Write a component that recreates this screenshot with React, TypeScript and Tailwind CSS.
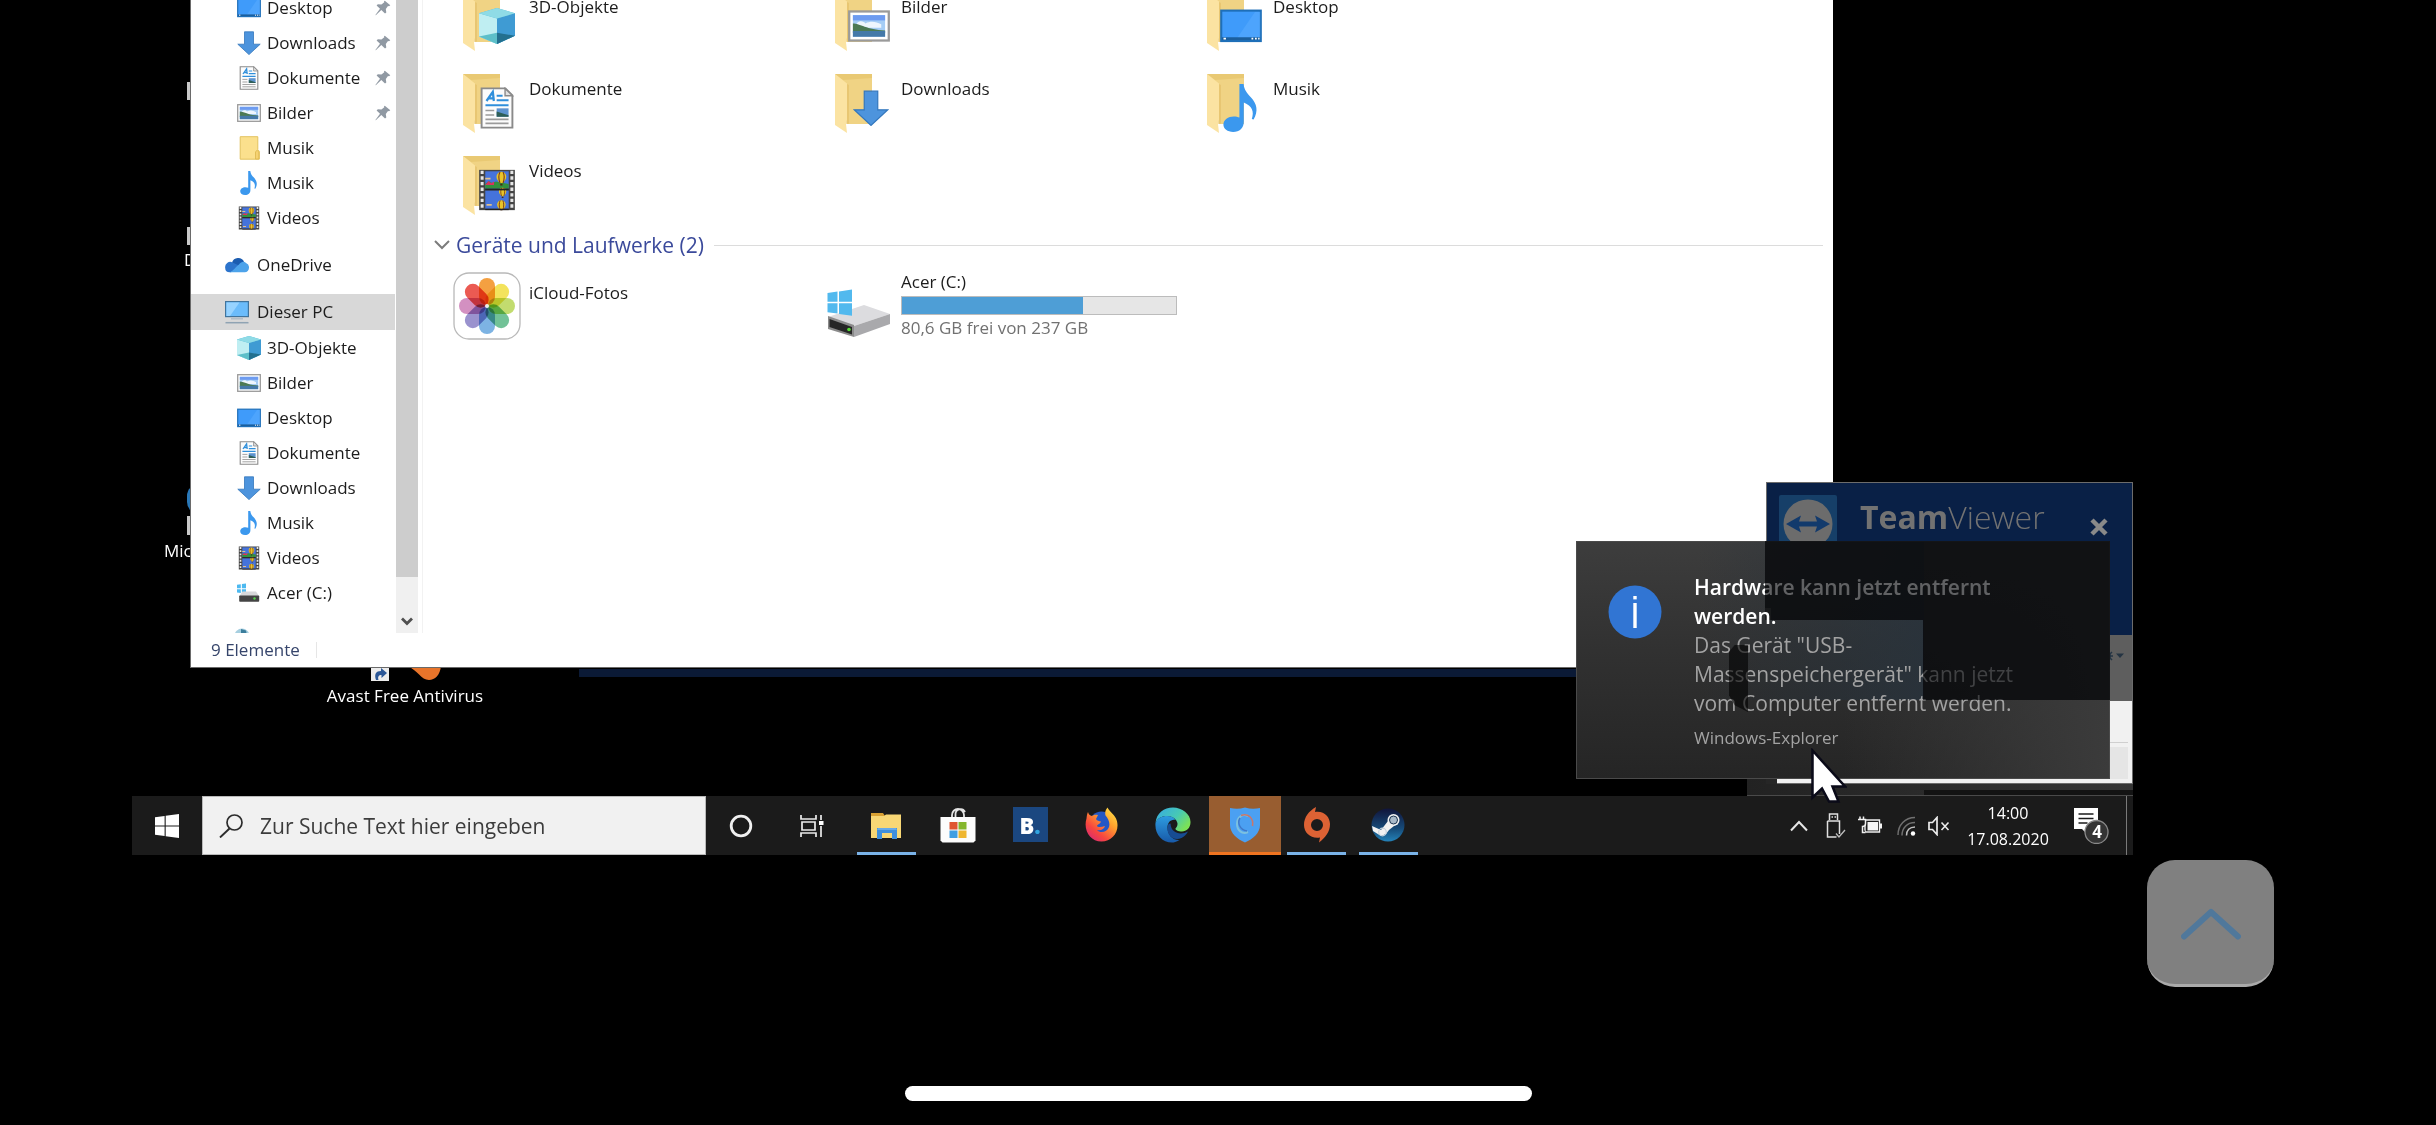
import React from "react";

type IconProps = { className?: string };

/* ---------- Explorer glyphs ---------- */

const DesktopIcon = ({ className = "w-6 h-6 shrink-0" }: IconProps) => (
  <svg viewBox="0 0 24 24" className={className} aria-hidden="true">
    <rect x="0.7" y="3.2" width="22.6" height="17.4" fill="#3f9bfa" stroke="#1e6fb8" strokeWidth="1.2" />
    <path d="M9 20L20 4h3v16z" fill="#5badff" opacity=".5" />
    <path d="M1 19.2h22" stroke="#1b5f9e" strokeWidth="1.6" />
    <path d="M2 19.2h1.4M18 19.2h1M20 19.2h1M21.8 19.2h.8" stroke="#fff" strokeWidth="1" />
  </svg>
);

const DownloadIcon = ({ className = "w-6 h-6 shrink-0" }: IconProps) => (
  <svg viewBox="0 0 24 24" className={className} aria-hidden="true">
    <path d="M7.5 0.8h9v12.4h6.7L12 23.6 0.8 13.2h6.7z" fill="#4d94dd" stroke="#3377bd" strokeWidth=".8" />
  </svg>
);

const DocumentIcon = ({ className = "w-6 h-6 shrink-0" }: IconProps) => (
  <svg viewBox="0 0 24 24" className={className} aria-hidden="true">
    <path d="M3.2 0.8h13.6l4 4v18.4H3.2z" fill="#fcfcfc" stroke="#8a8a8a" strokeWidth="1.1" />
    <path d="M16.6 0.8v4.2h4.2z" fill="#e2e2e2" stroke="#8a8a8a" strokeWidth=".8" />
    <path d="M6 8l3.6-5.2L10.2 8M7 6.5h3" fill="none" stroke="#2f8fdb" strokeWidth="1.3" />
    <path d="M11.8 5h3.4M11.8 7.6h6.8M5.4 10.4h13.2" stroke="#2f8fdb" strokeWidth="1.2" />
    <path d="M5.4 13.4h5M5.4 16h5M5.4 18.5h13.2M5.4 20.8h13.2" stroke="#9b9b9b" strokeWidth=".9" />
    <rect x="11.8" y="12.2" width="6.8" height="4.8" fill="#5d93cf" />
    <path d="M11.8 14l6.8 2.2v.8h-6.8z" fill="#2f5f57" />
  </svg>
);

const PictureIcon = ({ className = "w-6 h-6 shrink-0" }: IconProps) => (
  <svg viewBox="0 0 24 24" className={className} aria-hidden="true">
    <rect x="0.7" y="3.7" width="22.6" height="16.6" fill="#fff" stroke="#9a9a9a" strokeWidth="1.3" />
    <rect x="2.8" y="5.8" width="18.4" height="12.4" fill="#a5cdf5" />
    <rect x="2.8" y="5.8" width="18.4" height="3" fill="#6d9bf0" />
    <path d="M5 10.5c2-2 4-1 5 0 3-1.500 6-1 9 .5v2H5z" fill="#eef6fd" />
    <path d="M2.8 10.500c4 0 8 3.500 18.400 4V16H2.800z" fill="#4c7a54" />
    <path d="M2.800 14.800h18.400v3.400H2.800z" fill="#4479a8" />
  </svg>
);

const PlainFolderIcon = ({ className = "w-6 h-6 shrink-0" }: IconProps) => (
  <svg viewBox="0 0 24 24" className={className} aria-hidden="true">
    <path d="M3.200 0.700h17.600v13l1.500 1.500v8H3.200z" fill="#fbe08d" stroke="#e3c25f" strokeWidth="1" />
    <path d="M18.500 23v-7l1.500-1.800 1.800 1.800v7z" fill="#f5d272" stroke="#dcb64c" strokeWidth=".8" />
  </svg>
);

const MusicIcon = ({ className = "w-6 h-6 shrink-0" }: IconProps) => (
  <svg viewBox="0 0 24 24" className={className} aria-hidden="true">
    <path
      d="M11.200 0h2.100c.3 3 1.700 4.600 3.600 6.600 3.200 3.400 3.800 6.800 1.400 11.200l-.9-.3c1.300-3.800.2-6.600-4-8.300v9.700c0 3.200-2.200 5.100-5.300 5.100-2.900 0-4.900-1.500-4.900-3.700 0-2.500 2.400-4.100 5.200-4.100 1.100 0 2 .2 2.800.6z"
      fill="#3b98ee"
    />
  </svg>
);

const Balloon = ({ x, y, s }: { x: number; y: number; s: number }) => (
  <g transform={`translate(${x} ${y}) scale(${s})`}>
    <path d="M-3.500-1a3.500 3.500 0 017 0c0 2-1.600 3.200-2.300 4.500h-2.400C-1.900 2.200-3.500 1-3.500-1z" fill="#e8c42a" />
    <path d="M-1-4.300c-1 2-1 5 0 7.800M1.200-4.300c1 2 1 5 0 7.800" stroke="#7b3b18" strokeWidth=".8" fill="none" />
    <rect x="-.8" y="4" width="1.600" height="1.300" fill="#4a2a12" />
  </g>
);

const VideoIcon = ({ className = "w-6 h-6 shrink-0" }: IconProps) => (
  <svg viewBox="0 0 24 24" className={className} aria-hidden="true">
    <rect x="1.800" y="0.500" width="20.400" height="23" fill="#444" />
    <path d="M3.500 1v22M20.500 1v22" stroke="#e6e6e6" strokeWidth="1.700" strokeDasharray="1.900 1.300" />
    <rect x="5.300" y="1.300" width="13.400" height="9.900" fill="#4573dc" />
    <rect x="5.300" y="12.200" width="13.400" height="10.500" fill="#4573dc" />
    <path d="M5.300 8.500l2-1.500 2 1 2-.8 7.400 1.300v2.700H5.300z" fill="#33903d" />
    <path d="M5.500 8.800l1.700-1.900 1.500 1.200 1.600-1v2H5.500z" fill="#d8345f" />
    <path d="M5.300 5.500h3M6 20.500h3" stroke="#e0c08a" strokeWidth="1" />
    <Balloon x={14.500} y={5.200} s={0.800} />
    <Balloon x={15.200} y={13.400} s={0.600} />
    <Balloon x={14.500} y={21} s={0.700} />
    <rect x="5.300" y="11.200" width="13.400" height="1" fill="#222" />
    <rect x="5.300" y="22.700" width="13.400" height=".8" fill="#222" />
  </svg>
);

const CubeIcon = ({ className = "w-6 h-6 shrink-0" }: IconProps) => (
  <svg viewBox="0 0 24 24" className={className} aria-hidden="true">
    <path d="M0 3.500L12 0l12 3.500v15L12 24 0 19z" fill="#4fb9d6" />
    <path d="M0 3.500L12 7v17L0 19z" fill="#bfeef2" />
    <path d="M12 7l12-3.500v15L12 24z" fill="#3f9bd3" />
    <path d="M0 3.500L12 0l12 3.500L12 7z" fill="#8fdbe6" />
    <path d="M0 19l12-2.500V24z" fill="#5dbfc9" />
    <path d="M12 16.500l12 2L12 24z" fill="#23708f" />
  </svg>
);

const CloudIcon = ({ className = "w-6 h-6 shrink-0" }: IconProps) => (
  <svg viewBox="0 0 24 24" className={className} aria-hidden="true">
    <path d="M7 9.500a6.500 6.500 0 0112-1l-6 7z" fill="#1b5cb0" />
    <path d="M0.200 15a5.200 5.200 0 017.300-5.600L15 13l-9 6.300H4.600A4.400 4.400 0 010.200 15z" fill="#2c74cc" />
    <path d="M14 11.500c2-2.600 5-3.600 7-1.500a4.800 4.800 0 013 4.800c0 2.700-1.800 4.500-4.300 4.500H4.800c3-1 6-5.500 9.200-7.800z" fill="#4da3ea" />
  </svg>
);

const PcIcon = ({ className = "w-6 h-6 shrink-0" }: IconProps) => (
  <svg viewBox="0 0 24 24" className={className} aria-hidden="true">
    <rect x="0.600" y="1.600" width="22.800" height="15" fill="#6bbcfb" stroke="#41749c" strokeWidth="1.200" />
    <path d="M1.500 2.500h13L5 16H1.500z" fill="#97d3ff" />
    <path d="M6 18.800h12" stroke="#a9b7c2" strokeWidth="1.200" />
    <path d="M0.500 22.700h23" stroke="#8fa3b3" strokeWidth="1.500" />
  </svg>
);

const SmallDriveIcon = ({ className = "w-6 h-6 shrink-0" }: IconProps) => (
  <svg viewBox="0 0 24 24" className={className} aria-hidden="true">
    <path d="M0 3.800l3.800-.5v3.900H0zM4.900 3.100L9 2.500v4.700H4.900zM0 8.200h3.800v3.900l-3.800-.5zM4.900 8.200H9v4.600l-4.100-.5z" fill="#4db9f0" />
    <path d="M5.500 10.500h13.500l3 4.500H2.500z" fill="#d7d8da" />
    <rect x="2.200" y="14.500" width="20" height="6.300" rx=".8" fill="#444" />
    <circle cx="17.500" cy="17.500" r="1.200" fill="#56d34c" />
  </svg>
);

const PinIcon = () => (
  <svg viewBox="0 0 16 16" className="w-4 h-4 mr-1 shrink-0" aria-hidden="true">
    <path d="M9.800 0.800l5.500 4.500-1.300 1-1-.2-2.200 3 .5 3.400-1.300 1L6.300 10 .8 15.300 0.400 14.900 5 8.700 1.600 5.500l1.200-1.200 3.600.1L9.300 2.300 9 1.300z" fill="#9099a3" />
  </svg>
);

const FolderIcon = ({ children }: { children: React.ReactNode }) => (
  <div className="relative w-[52px] h-[60px]">
    <svg viewBox="0 0 52 60" className="w-full h-full" aria-hidden="true">
      <path d="M0 0h37v50H12z" fill="#f0d384" />
      <path d="M0 0h37v4L8 6z" fill="#e9c973" />
      <path d="M0 0l12 9.500V46l-1 4 1 9L0 51z" fill="#fbe3a2" />
      <path d="M12 10v36l-1 4 3-.5V11z" fill="#e2be66" opacity=".6" />
    </svg>
    <div className="absolute right-0 bottom-1 flex h-[44px] w-[36px] items-center justify-center">{children}</div>
  </div>
);

const petals = ["#f3962c", "#f2e04a", "#bcd95f", "#63bb8c", "#6fabe0", "#8f86c9", "#cf84ba", "#e9483f"];

const PhotosIcon = () => (
  <svg viewBox="0 0 68 68" className="h-[68px] w-[68px]" aria-hidden="true">
    <rect x="1" y="1" width="66" height="66" rx="15" fill="#fff" stroke="#b9b9b9" strokeWidth="1.300" />
    {petals.map((c, i) => (
      <rect key={c} x="26" y="6" width="16" height="27" rx="8" fill={c} className="mix-blend-multiply" transform={`rotate(${i * 45} 34 34)`} opacity=".9" />
    ))}
    <circle cx="34" cy="34" r="2" fill="#eee" />
  </svg>
);

const DriveIcon = () => (
  <svg viewBox="0 0 64 50" className="h-[50px] w-[64px]" aria-hidden="true">
    <path d="M1 28l36-12 26 9-36 12z" fill="#dcdcdf" />
    <path d="M27 37l36-12v10L27 48z" fill="#a9a9ac" />
    <path d="M1 27l26 9v12L1 40z" fill="#8b8b8b" />
    <path d="M2.500 30l22.500 8v7.500L2.500 38z" fill="#262626" />
    <circle cx="22" cy="40.500" r="1.800" fill="#56dc35" />
    <path d="M0.500 4l10-1.400v10.200H0.500zM12 2.400L25 .5v12.300H12zM0.500 14.300h10v10.300l-10-1.400zM12 14.300h13v12.400l-13-1.800z" fill="#52b9ee" />
  </svg>
);

/* ---------- Explorer ---------- */

type TreeRow = { label: string; icon: React.ReactNode; pinned?: boolean };

const quick: TreeRow[] = [
  { label: "Desktop", icon: <DesktopIcon />, pinned: true },
  { label: "Downloads", icon: <DownloadIcon />, pinned: true },
  { label: "Dokumente", icon: <DocumentIcon />, pinned: true },
  { label: "Bilder", icon: <PictureIcon />, pinned: true },
  { label: "Musik", icon: <PlainFolderIcon /> },
  { label: "Musik", icon: <MusicIcon /> },
  { label: "Videos", icon: <VideoIcon /> },
];

const pcRows: TreeRow[] = [
  { label: "3D-Objekte", icon: <CubeIcon /> },
  { label: "Bilder", icon: <PictureIcon /> },
  { label: "Desktop", icon: <DesktopIcon /> },
  { label: "Dokumente", icon: <DocumentIcon /> },
  { label: "Downloads", icon: <DownloadIcon /> },
  { label: "Musik", icon: <MusicIcon /> },
  { label: "Videos", icon: <VideoIcon /> },
  { label: "Acer (C:)", icon: <SmallDriveIcon /> },
];

const TreeItem = ({ row }: { row: TreeRow }) => (
  <button type="button" className="flex h-[35px] w-full items-center gap-[6px] pl-[46px] text-left">
    {row.icon}
    <span className="min-w-0 flex-1">{row.label}</span>
    {row.pinned && <PinIcon />}
  </button>
);

const folders = [
  { label: "3D-Objekte", icon: <CubeIcon className="h-9 w-9" /> },
  { label: "Bilder", icon: <PictureIcon className="h-[42px] w-[42px] shrink-0" /> },
  { label: "Desktop", icon: <DesktopIcon className="h-[42px] w-[42px] shrink-0" /> },
  { label: "Dokumente", icon: <DocumentIcon className="h-[42px] w-[42px] shrink-0" /> },
  { label: "Downloads", icon: <DownloadIcon className="h-9 w-9 ml-1 shrink-0" /> },
  { label: "Musik", icon: <MusicIcon className="h-[48px] w-[48px] shrink-0" /> },
  { label: "Videos", icon: <VideoIcon className="h-[42px] w-[42px] shrink-0" /> },
];

const Explorer = () => (
  <section className="relative ml-[58px] mr-[300px] flex h-[668px] flex-col overflow-hidden border-b border-l border-[#6a6a6a] bg-white text-[17px] leading-[30px] text-[#1c1c1c]">
    <div className="flex h-[633px] overflow-hidden">
      <nav className="w-[204px] shrink-0 -mt-[10px]">
        {quick.map((r, i) => (
          <TreeItem key={i} row={r} />
        ))}
        <button type="button" className="mt-3 flex h-[35px] w-full items-center gap-2 pl-[34px] text-left">
          <CloudIcon />
          OneDrive
        </button>
        <button type="button" className="mt-3 flex h-[36px] w-full items-center gap-2 bg-[#d8d8d8] pl-[34px] text-left">
          <PcIcon />
          Dieser PC
        </button>
        {pcRows.map((r) => (
          <TreeItem key={r.label} row={r} />
        ))}
        <svg viewBox="0 0 24 24" className="ml-[42px] mt-[18px] h-6 w-6" aria-hidden="true">
          <circle cx="9" cy="8" r="7.500" fill="#a6cfe0" />
          <path d="M8 1l5 1.500 1 5-6-1z" fill="#3b7d9c" />
        </svg>
      </nav>
      <div className="ml-px flex w-[22px] shrink-0 flex-col bg-[#f0f0f0]">
        <div className="h-[577px] bg-[#cdcdcd]" />
        <svg viewBox="0 0 22 56" className="h-[56px] w-[22px]" aria-hidden="true">
          <path d="M6 41.500l5 5 5-5" fill="none" stroke="#505050" strokeWidth="2.800" />
        </svg>
      </div>
      <main className="ml-1 min-w-0 flex-1 border-l border-[#f2f2f2]">
        <div className="-mt-2 ml-7 grid grid-cols-[repeat(auto-fill,372px)] gap-y-[22px]">
          {folders.map((f) => (
            <button type="button" key={f.label} className="flex h-[60px] items-start gap-[6px] text-left">
              <div className="flex w-[72px] justify-center pl-1">
                <FolderIcon>{f.icon}</FolderIcon>
              </div>
              {f.label}
            </button>
          ))}
        </div>
        <h2 className="mt-[14px] flex h-[30px] items-center text-[21px] leading-[30px] text-[#3b4a9b]">
          <svg viewBox="0 0 16 10" className="ml-[11px] mr-[6px] h-[10px] w-4" aria-hidden="true">
            <path d="M1 1l7 7 7-7" fill="none" stroke="#7c7c7c" strokeWidth="2" />
          </svg>
          Geräte und Laufwerke (2)
          <span className="ml-[10px] mr-[10px] h-px flex-1 bg-[#dcdcdc]" />
        </h2>
        <div className="ml-7 mt-2 grid grid-cols-[repeat(auto-fill,372px)]">
          <button type="button" className="flex items-start gap-[6px] pt-[4px] text-left">
            <div className="flex w-[72px] justify-center">
              <PhotosIcon />
            </div>
            <span className="pt-[6px]">iCloud-Fotos</span>
          </button>
          <button type="button" className="flex items-start gap-[6px] text-left">
            <div className="flex w-[72px] justify-center pt-[21px]">
              <DriveIcon />
            </div>
            <div>
              <div className="leading-7">Acer (C:)</div>
              <div className="flex h-[19px] w-[276px] border border-[#bcbcbc] bg-[#e6e6e6]">
                <div className="w-[66%] bg-[#4e9ed6]" />
              </div>
              <div className="text-[#717171] leading-[26px]">80,6 GB frei von 237 GB</div>
            </div>
          </button>
        </div>
      </main>
    </div>
    <footer className="flex flex-1 items-center pl-5 text-[#36456b]">
      9 Elemente
      <span className="ml-4 h-4 w-px bg-[#e6e6e6]" />
    </footer>
  </section>
);

/* ---------- TeamViewer and notification ---------- */

const TeamViewer = () => (
  <aside className="absolute right-0 top-[482px] flex h-[302px] w-[367px] flex-col border border-[#6c6c6c] bg-[#f1f1f1]">
    <div className="flex h-[152px] shrink-0 items-start bg-[#092046] pl-3 pr-6 pt-3">
      <svg viewBox="0 0 58 58" className="h-[58px] w-[58px]" aria-hidden="true">
        <rect width="58" height="58" rx="2" fill="#163f68" />
        <circle cx="29" cy="29" r="24.500" fill="#6c6c6c" />
        <path d="M7 29l15-8.500-2 6h18l-2-6L51 29l-15 8.500 2-6H20l2 6z" fill="#123a6c" />
      </svg>
      <div className="ml-4 flex-1">
        <div className="pl-[7px] text-[32px] leading-[44px] text-[#727272]">
          <b>Team</b>
          <span className="font-light">Viewer</span>
        </div>
        <div className="-mt-1 text-[17px] leading-6 text-[#6b6b6b]">Probeversion aktiv</div>
      </div>
      <button type="button" aria-label="Schließen" className="mt-[23px]">
        <svg viewBox="0 0 18 18" className="h-[18px] w-[18px]" aria-hidden="true">
          <path d="M2 2l14 14M16 2L2 16" stroke="#898989" strokeWidth="4.500" />
        </svg>
      </button>
    </div>
    <div className="flex h-[66px] shrink-0 justify-end bg-[#5e5e5e] pr-2 pt-[11px]">
      <svg viewBox="0 0 22 20" className="h-5 w-[22px]" aria-hidden="true">
        <circle cx="6" cy="10" r="3" fill="#253443" />
        <path d="M6 4v12M0 10h11M2 6l8 8M10 6l-8 8" stroke="#253443" strokeWidth="1.500" />
        <path d="M14 7.500h8l-4 4.500z" fill="#253443" />
      </svg>
    </div>
    <div className="mr-1 h-[42px] shrink-0 border-b border-[#cfcfcf]" />
    <div className="mb-1 mr-1 mt-1 flex-1 bg-[#e5e5e5]" />
  </aside>
);

const Toast = () => (
  <div className="absolute right-[23px] top-[541px] flex h-[238px] w-[534px] border border-[#4a4a4a] bg-gradient-to-b from-[#3d3d3d] via-[#303030] to-[#252525]">
    <div className="absolute inset-0 bg-gradient-to-r from-transparent via-transparent to-[#3b3b3b]" />
    <div className="absolute left-[120px] top-0 h-[158px] w-[227px] bg-gradient-to-r from-transparent to-[#27323c]/80" />
    <div className="absolute -right-px -top-px h-[79px] w-[345px] bg-black/50" />
    <div className="absolute -right-px top-[78px] h-[80px] w-[187px] bg-black/50" />
    <svg viewBox="0 0 54 54" className="relative ml-[31px] mt-[43px] h-[54px] w-[54px] shrink-0" aria-hidden="true">
      <circle cx="27" cy="27" r="26.500" fill="#3175d3" />
      <rect x="25.300" y="11" width="3.400" height="3.400" fill="#fff" />
      <rect x="25.300" y="18" width="3.400" height="25" fill="#fff" />
    </svg>
    <div className="relative ml-8 mt-[31px] w-[340px] text-[21px] leading-[29px] text-[#a3a3a3]">
      <p className="font-semibold text-white">
        Hardware kann jetzt entfernt
        <br />
        werden.
      </p>
      <p>
        Das Gerät "USB-
        <br />
        Massenspeichergerät" kann jetzt
        <br />
        vom Computer entfernt werden.
      </p>
      <p className="mt-[5px] text-[17px]">Windows-Explorer</p>
    </div>
    <div className="absolute -right-px -top-px h-[60px] w-[345px] bg-[#0b0c10]/65" />
    <div className="absolute -right-px top-[59px] h-[19px] w-[339px] bg-[#0b0c10]/65" />
    <div className="absolute right-[338px] top-[59px] h-[7px] w-[6px] bg-[#0b0c10]/65" />
    <div className="absolute -right-px top-[78px] h-[80px] w-[187px] bg-[#0b0c10]/65" />
    <div className="absolute left-[152px] top-[103px] h-[67px] w-[19px] bg-black/60 [clip-path:polygon(0_10%,30%_0,100%_0,100%_100%,30%_90%,0_75%)]" />
  </div>
);

const Cursor = () => (
  <svg viewBox="0 0 36 56" className="absolute right-[286px] top-[748px] z-10 h-[56px] w-9" aria-hidden="true">
    <path d="M1.500 2.500v47l9.500-9 7 13h9.500l-6-15H34z" fill="#fff" stroke="#0a0a18" strokeWidth="2.500" />
  </svg>
);

const Desktop = () => (
  <div className="relative ml-[132px] mr-[303px] h-[796px] text-[17px] leading-[30px]">
    <div className="absolute left-[55px] top-[82px] h-[18px] w-3 bg-[#c9c9c9]" />
    <div className="absolute left-[55px] top-[227px] h-[18px] w-3 bg-[#c9c9c9]" />
    <div className="absolute left-[52px] top-[245px] text-white">D</div>
    <div className="absolute left-[55px] top-[484px] h-[30px] w-6 rounded-full bg-[#2a78b8]" />
    <div className="absolute left-[55px] top-[516px] h-[19px] w-3 bg-[#c9c9c9]" />
    <div className="absolute left-[32px] top-[536px] text-white">Microsoft</div>
    <div className="absolute left-[447px] right-[500px] top-[669px] h-2 bg-[#0b1a36]" />
    <div className="absolute left-[196px] top-[660px] flex w-[154px] flex-col items-center">
      <div className="flex h-[21px] items-end gap-[18px] pr-1">
        <svg viewBox="0 0 18 21" className="ml-[6px] h-[21px] w-[18px]" aria-hidden="true">
          <rect width="18" height="21" fill="#ececec" />
          <path d="M5 20c-2-6 0-9 5-9V8l6 5-5.500 5v-3c-3 0-4 2-3 5z" fill="#2b5797" />
        </svg>
        <svg viewBox="0 0 34 21" className="h-[21px] w-[34px]" aria-hidden="true">
          <path d="M0 0h34v6c-1 9-6 14-12 14-8 0-11-10-22-14z" fill="#e8742a" />
        </svg>
      </div>
      <span className="whitespace-nowrap text-white">Avast Free Antivirus</span>
    </div>
    <Explorer />
    <div className="absolute bottom-0 right-0 h-[17px] w-[386px] border-b border-[#4a4a4a] bg-gradient-to-r from-[#222] to-[#353535]" />
    <div className="absolute bottom-px right-0 h-[5px] w-[209px] bg-[#131313]" />
    <TeamViewer />
    <div className="absolute right-[356px] top-[779px] h-[5px] w-[11px] bg-[#262626]" />
    <Toast />
    <Cursor />
  </div>
);

/* ---------- Taskbar ---------- */

const StartLogo = () => (
  <svg viewBox="0 0 24 24" className="h-6 w-6" aria-hidden="true">
    <path d="M0 3.200l9.600-1.300v9.500H0zM10.700 1.700L24 0v11.400H10.700zM0 12.500h9.600V22L0 20.700zM10.700 12.500H24V24l-13.300-1.800z" fill="#fff" />
  </svg>
);

const FileExplorerApp = () => (
  <svg viewBox="0 0 36 36" className="h-9 w-9" aria-hidden="true">
    <path d="M2 6h12l2 3h16v4H2z" fill="#d9a133" />
    <path d="M2 9h13l2-1.500h15V31H2z" fill="#f8d775" />
    <path d="M8 21h20v11h-5v-6H13v6H8z" fill="#3f8fdc" />
    <path d="M9 21h18l1 2H8z" fill="#67aae8" />
  </svg>
);

const StoreApp = () => (
  <svg viewBox="0 0 36 36" className="h-9 w-9" aria-hidden="true">
    <path d="M12 12V8a6 6 0 0112 0v4M15.500 12V7.500a5 5 0 019.500-2.500" fill="none" stroke="#e4e4e4" strokeWidth="1.800" />
    <path d="M0.500 10h35v23.500l-2 2h-31l-2-2z" fill="#fcfcfc" />
    <path d="M9.500 15h8v7.500h-8z" fill="#df5530" />
    <path d="M18.500 15h8v7.500h-8z" fill="#84b62c" />
    <path d="M9.500 23.500h8V31h-8z" fill="#3f9ee2" />
    <path d="M18.500 23.500h8V31h-8z" fill="#efb62f" />
  </svg>
);

const BookingApp = () => (
  <div className="flex h-[35px] w-[35px] items-center justify-center bg-[#1b4780] text-[22px] leading-none font-extrabold text-white">
    B<span className="text-[#31a3de]">.</span>
  </div>
);

const FirefoxApp = () => (
  <svg viewBox="0 0 36 36" className="h-9 w-9" aria-hidden="true">
    <defs>
      <linearGradient id="ff" x1="1" y1="0" x2="0.200" y2="1">
        <stop offset="0" stopColor="#fff14f" />
        <stop offset=".4" stopColor="#ffa12d" />
        <stop offset=".75" stopColor="#f7463f" />
        <stop offset="1" stopColor="#d92a72" />
      </linearGradient>
    </defs>
    <circle cx="17.500" cy="17" r="12.500" fill="#2357c5" />
    <path d="M4 5c.5 2.500 2 3.500 4 4 2-1.500 4-1.500 6-1l-2 4c1 2 3 2 5 2.500-.5 2-2.500 2.500-4 4 0 2 4 2 8 .5-1 3-4 5-8 4 3 3.500 10 2.500 12-3 1.200-4-.5-8-3.500-11.500C20.500 5 22 2.500 23.500.5c2 4 6 6 8.500 11 5 11-3 23-14.500 23S-1 23 2.500 11.500C2.800 9 3 7 4 5z" fill="url(#ff)" />
  </svg>
);

const EdgeApp = () => (
  <svg viewBox="0 0 36 36" className="h-9 w-9" aria-hidden="true">
    <defs>
      <linearGradient id="edgeTop" x1="0" y1="0" x2="1" y2=".6">
        <stop offset="0" stopColor="#35a9e6" />
        <stop offset=".6" stopColor="#47c9b4" />
        <stop offset="1" stopColor="#7be157" />
      </linearGradient>
      <linearGradient id="edgeLow" x1="0" y1="0" x2="0" y2="1">
        <stop offset="0" stopColor="#2d9ce0" />
        <stop offset="1" stopColor="#1859a8" />
      </linearGradient>
    </defs>
    <path d="M0.500 16C1.500 6 9 0.500 18 0.500S35.500 7 35.500 15c0 6-4 9.500-8.500 9.500-4 0-7-1.500-6.500-3 1.500-1.500 2-3 2-5C22 12 17 9 12 9 6 9 2 12 .5 16z" fill="url(#edgeTop)" />
    <path d="M0.500 16C2 11.500 7 9 12 9c4 0 7 1.500 8.500 4-5-1-8 3-8 7.500 0 8 6 13 12 12.500C21 35 19 35.500 17 35.500 7 35.500-.5 27 .5 16z" fill="url(#edgeLow)" />
    <path d="M13.500 17c-4 9 4 18 13 14 3-1.500 5-3.500 6.500-6.500-7 4-17 2-17.500-8z" fill="#174c92" />
  </svg>
);

const ShieldApp = () => (
  <svg viewBox="0 0 36 36" className="h-9 w-9" aria-hidden="true">
    <path d="M3 1c5 1 10 1 15-.5C23 2 28 2 33 1v17c0 8-7 14-15 17.500C10 32 3 26 3 18z" fill="#4ba0f2" />
    <path d="M21 9c-6-3-11 2-11 8s5 11 11 8" fill="none" stroke="#7cc0e0" strokeWidth="2" />
    <path d="M14 8.500c7-3 13 3 11.500 10.500" fill="none" stroke="#c9776b" strokeWidth="1.500" />
    <path d="M13 11c-3 5 0 12 7 13" fill="none" stroke="#3f78c8" strokeWidth="1.500" />
  </svg>
);

const OriginApp = () => (
  <svg viewBox="0 0 36 36" className="h-9 w-9" aria-hidden="true">
    <path fillRule="evenodd" d="M17 0l-1 5c9-1.500 15 5 15 12 0 8-5 14-11 18.500l1-5C12 32 5 26 5 18 5 10 10 4 17 0zM18 12a6 6 0 100 12 6 6 0 000-12z" fill="#dd6234" />
  </svg>
);

const SteamApp = () => (
  <svg viewBox="0 0 36 36" className="h-9 w-9" aria-hidden="true">
    <defs>
      <linearGradient id="steam" x1="0" y1="0" x2="0" y2="1">
        <stop offset="0" stopColor="#11143a" />
        <stop offset=".6" stopColor="#164a78" />
        <stop offset="1" stopColor="#2482b8" />
      </linearGradient>
    </defs>
    <circle cx="18" cy="18" r="16.500" fill="url(#steam)" />
    <path d="M2 19l9 4 7-9 4-5 7 6-10 8-3 4-5 2L3 24z" fill="#f2f2f2" />
    <circle cx="23.500" cy="13" r="6" fill="#f2f2f2" />
    <circle cx="23.500" cy="13" r="4" fill="#a9b9c9" stroke="#1c3450" strokeWidth="1" />
    <circle cx="12.500" cy="25" r="3.800" fill="none" stroke="#c6d2dd" strokeWidth="1.200" />
  </svg>
);

const apps = [
  { label: "Explorer", icon: <FileExplorerApp />, state: "open" },
  { label: "Store", icon: <StoreApp />, state: "" },
  { label: "Booking", icon: <BookingApp />, state: "" },
  { label: "Firefox", icon: <FirefoxApp />, state: "" },
  { label: "Edge", icon: <EdgeApp />, state: "" },
  { label: "Shield", icon: <ShieldApp />, state: "alert" },
  { label: "Origin", icon: <OriginApp />, state: "open" },
  { label: "Steam", icon: <SteamApp />, state: "open" },
];

const Taskbar = () => (
  <footer className="ml-[132px] mr-[303px] flex h-[59px] items-stretch bg-[#1b1b1b]">
    <button type="button" aria-label="Start" className="flex w-[70px] items-center justify-center">
      <StartLogo />
    </button>
    <label className="flex w-[504px] items-center border border-[#b9b9b9] bg-[#f1f1f1] pl-4">
      <svg viewBox="0 0 24 24" className="h-6 w-6" aria-hidden="true">
        <circle cx="15.500" cy="8.500" r="7.500" fill="none" stroke="#2c2c2c" strokeWidth="1.700" />
        <path d="M10.500 14.500L1 23.500" stroke="#2c2c2c" strokeWidth="1.900" />
      </svg>
      <input
        aria-label="Suche"
        placeholder="Zur Suche Text hier eingeben"
        className="ml-[17px] min-w-0 flex-1 bg-transparent text-[21px] leading-[30px] text-[#3c3c3c] outline-none placeholder:text-[#3c3c3c]"
      />
    </label>
    <button type="button" aria-label="Cortana" className="flex w-[70px] items-center justify-center">
      <svg viewBox="0 0 24 24" className="h-6 w-6" aria-hidden="true">
        <circle cx="12" cy="12" r="9.800" fill="none" stroke="#f0f0f0" strokeWidth="2.800" />
      </svg>
    </button>
    <button type="button" aria-label="Taskansicht" className="flex w-[72px] items-center justify-center">
      <svg viewBox="0 0 24 24" className="h-6 w-6" aria-hidden="true">
        <path d="M1 1v4h15V1M1 23v-4h15v4M2 8h13v8H2zM21 1v5M21 12v11" fill="none" stroke="#ececec" strokeWidth="1.700" />
        <rect x="19" y="7" width="4.500" height="4" fill="#fff" />
      </svg>
    </button>
    <div className="ml-[3px] flex w-[573px]">
      {apps.map((a) =>
        a.state === "alert" ? (
          <button type="button" key={a.label} aria-label={a.label} className="flex flex-1 flex-col items-center border-b-[3px] border-[#ef7420] bg-[#985d30] pt-[11px]">
            {a.icon}
          </button>
        ) : (
          <button type="button" key={a.label} aria-label={a.label} className="flex flex-1 flex-col items-center justify-between pt-[11px]">
            {a.icon}
            {a.state && <span className="h-[3px] w-[59px] bg-[#7ab3e8]" />}
          </button>
        ),
      )}
    </div>
    <div className="ml-auto flex items-center text-white">
      <button type="button" aria-label="Ausgeblendete Symbole" className="mr-[18px]">
        <svg viewBox="0 0 18 12" className="h-3 w-[18px]" aria-hidden="true">
          <path d="M1 10.500L9 2l8 8.500" fill="none" stroke="#e6e6e6" strokeWidth="2" />
        </svg>
      </button>
      <svg viewBox="0 0 20 26" className="mr-3 h-[26px] w-5" aria-hidden="true">
        <path d="M3.500 7V1h8v6M1.500 8h12v13M1.500 8v16h9" fill="none" stroke="#e0e0e0" strokeWidth="1.500" />
        <path d="M5.500 4h1.500M8.500 4H10" stroke="#e0e0e0" strokeWidth="1.500" />
        <path d="M10 20.500l3 3.500 6-7" fill="none" stroke="#bdbdbd" strokeWidth="1.300" />
      </svg>
      <svg viewBox="0 0 24 20" className="mr-[15px] h-5 w-6" aria-hidden="true">
        <path d="M7 4h14.500v12H7z" fill="none" stroke="#f0f0f0" strokeWidth="1.400" />
        <path d="M9.500 6h10.500v8.500H9.500zM22 7.500h2v5h-2z" fill="#f5f5f5" />
        <path d="M0 3.500h7.500v4c0 2-1.700 3-3 3v6h3" fill="#1b1b1b" stroke="#f0f0f0" strokeWidth="1.500" />
        <path d="M2 .5v3M5.500.5v3" stroke="#f0f0f0" strokeWidth="1.500" />
      </svg>
      <svg viewBox="0 0 20 20" className="mr-[11px] h-5 w-5" aria-hidden="true">
        <path d="M1 19C1 9 8 1.500 18 1.500M5 19.500c0-7.500 5-13 13-13" fill="none" stroke="#707070" strokeWidth="1.500" />
        <path d="M9.500 19.500c0-5 3-8.500 8.500-8.500" fill="none" stroke="#c0c0c0" strokeWidth="1.500" />
        <circle cx="16" cy="17.500" r="2.200" fill="#fff" />
      </svg>
      <svg viewBox="0 0 22 20" className="h-5 w-[22px]" aria-hidden="true">
        <path d="M1 6.500h3.500L9 1.500v17l-4.500-5H1z" fill="none" stroke="#ececec" strokeWidth="1.700" />
        <path d="M13.500 6.500l7 7.500M20.500 6.500l-7 7.500" stroke="#ececec" strokeWidth="1.600" />
      </svg>
      <time className="ml-4 w-[84px] text-center text-base leading-[26px]">
        14:00
        <br />
        17.08.2020
      </time>
      <button type="button" aria-label="Benachrichtigungen" className="relative ml-[23px] mr-[17px] h-9 w-9">
        <svg viewBox="0 0 36 36" className="h-9 w-9" aria-hidden="true">
          <path d="M1 0h24v21H15v6l-6-6H1z" fill="#fff" />
          <path d="M5.500 6h15M5.500 10.500h15M5.500 15h9" stroke="#1b1b1b" strokeWidth="1.700" />
          <circle cx="23.500" cy="24" r="11.500" fill="#343434" stroke="#8a8a8a" strokeWidth="1.300" />
        </svg>
        <span className="absolute bottom-0 right-[7px] text-[17px] leading-6 font-bold">4</span>
      </button>
      <span className="mr-[6px] h-[59px] w-px bg-[#7a7a7a]" />
    </div>
  </footer>
);

export default function App() {
  return (
    <div className="relative min-h-screen overflow-hidden bg-black font-['Open_Sans','Noto_Sans',sans-serif]">
      <Desktop />
      <Taskbar />
      <button
        type="button"
        aria-label="Nach oben"
        className="absolute right-[162px] top-[860px] flex h-[127px] w-[127px] items-center justify-center rounded-[28px] border-b-[3px] border-[#aaaaaa] bg-[#808080]"
      >
        <svg viewBox="0 0 60 32" className="mt-1 h-8 w-[60px]" aria-hidden="true">
          <path d="M3 28.500L30 4l27 24.500" fill="none" stroke="#50789b" strokeWidth="6" strokeLinecap="round" strokeLinejoin="round" />
        </svg>
      </button>
      <div className="mx-auto mt-[231px] h-[15px] w-[627px] rounded-full bg-white" />
    </div>
  );
}
